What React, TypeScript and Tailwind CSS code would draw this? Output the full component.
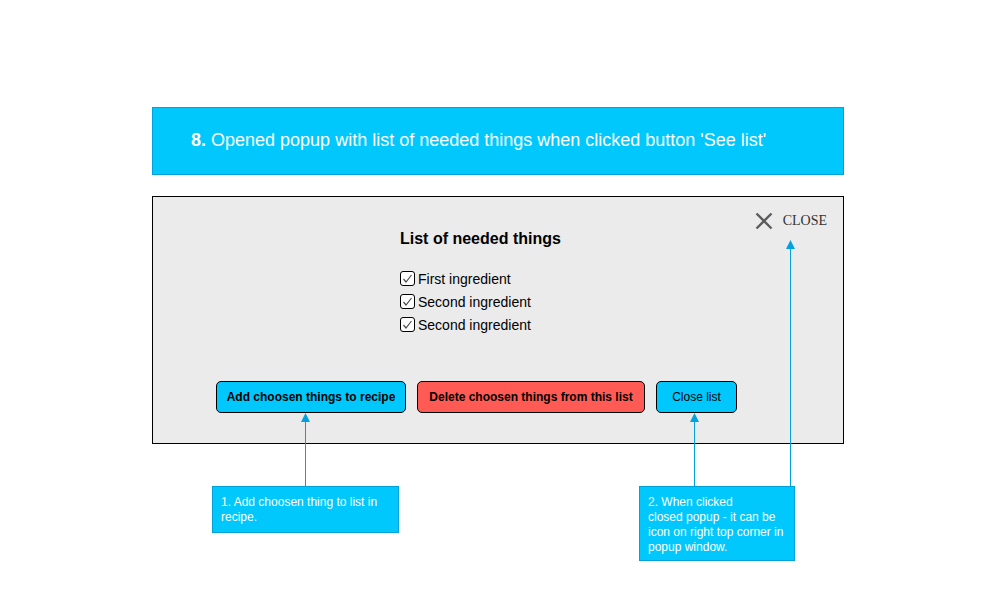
import { useId } from "react";
import type { ReactNode } from "react";

function Arrow({ height, className }: { height: number; className: string }) {
  return (
    <svg
      aria-hidden="true"
      width="9"
      height={height}
      viewBox={`0 0 9 ${height}`}
      className={`pointer-events-none absolute bottom-full ${className}`}
    >
      <path d={`M4.5 8V${height}`} stroke="#00a2e0" strokeWidth="1" />
      <path d="M4.5 0L9 9H0Z" fill="#00a2e0" />
    </svg>
  );
}

function Ingredient({ label }: { label: string }) {
  const id = useId();
  return (
    <li className="flex h-[23px] items-center gap-[3px]">
      <span className="grid size-[15px]">
        <input
          id={id}
          type="checkbox"
          defaultChecked
          className="peer col-start-1 row-start-1 size-[15px] appearance-none rounded-[3px] border border-black bg-white"
        />
        <svg
          aria-hidden="true"
          viewBox="0 0 15 15"
          className="pointer-events-none invisible col-start-1 row-start-1 size-[15px] peer-checked:visible"
        >
          <path d="M3.5 8L6 11L11.5 4" fill="none" stroke="#4d4d4d" strokeWidth="1.2" />
        </svg>
      </span>
      <label htmlFor={id} className="text-sm text-black">
        {label}
      </label>
    </li>
  );
}

function ActionButton({ className, children }: { className: string; children: ReactNode }) {
  return (
    <button
      type="button"
      className={`h-8 rounded-[5px] border border-black text-xs whitespace-nowrap text-black ${className}`}
    >
      {children}
    </button>
  );
}

export default function App() {
  return (
    <main className="bg-white pt-[107px] pr-[148px] pb-12 pl-[152px] font-['Liberation_Sans',Arial,sans-serif]">
      <h1 className="border border-[#00a2d8] bg-[#00c8fc] px-[38px] pt-5 pb-[22px] text-lg leading-6 font-normal text-white">
        <b>8.</b> Opened popup with list of needed things when clicked button 'See list'
      </h1>

      <section
        role="dialog"
        aria-labelledby="popup-title"
        className="mt-[21px] border border-black bg-[#ebebeb] pt-[14px] pb-[30px]"
      >
        <div className="flex justify-end pr-4">
          <button
            type="button"
            className="flex h-5 items-center gap-2.5 font-['Liberation_Serif','Times_New_Roman',serif] text-sm text-[#333333]"
          >
            <svg aria-hidden="true" viewBox="0 0 18 18" className="size-[18px]">
              <path d="M1.5 1.5L16.5 16.5M16.5 1.5L1.5 16.5" stroke="#5c5c5c" strokeWidth="2.4" />
            </svg>
            CLOSE
          </button>
        </div>

        <div className="pl-[247px]">
          <h2 id="popup-title" className="text-base leading-4 font-bold text-black">
            List of needed things
          </h2>
          <ul className="mt-5">
            <Ingredient label="First ingredient" />
            <Ingredient label="Second ingredient" />
            <Ingredient label="Second ingredient" />
          </ul>
        </div>

        <div className="mt-[45px] flex gap-[11px] pl-[63px]">
          <ActionButton className="w-[190px] bg-[#00c8fc] font-bold">
            Add choosen things to recipe
          </ActionButton>
          <ActionButton className="w-[228px] bg-[#ff5b54] font-bold">
            Delete choosen things from this list
          </ActionButton>
          <ActionButton className="w-[81px] bg-[#00c8fc]">Close list</ActionButton>
        </div>
      </section>

      <div className="mt-[42px] flex items-start gap-60 pl-[60px] text-xs leading-[15px] text-white">
        <aside className="relative w-[187px] border border-[#00a2d8] bg-[#00c8fc] px-2 pt-2 pb-[7px]">
          <Arrow height={74} className="left-[88px]" />
          <p>1. Add choosen thing to list in recipe.</p>
        </aside>
        <aside className="relative w-[156px] border border-[#00a2d8] bg-[#00c8fc] px-2 pt-2 pb-[5px]">
          <Arrow height={74} className="left-[50px]" />
          <Arrow height={247} className="left-[146px]" />
          <p>
            2. When clicked
            <br />
            closed popup - it can be icon on right top corner in popup window.
          </p>
        </aside>
      </div>
    </main>
  );
}
